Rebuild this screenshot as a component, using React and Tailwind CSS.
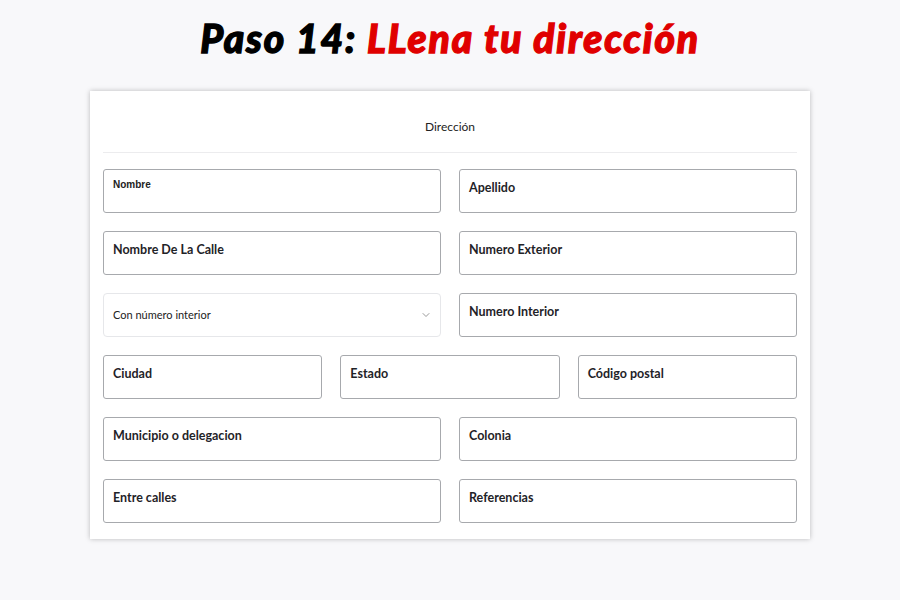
import React from 'react';
import { ChevronDown } from 'lucide-react';

const label = "text-[12.5px] font-bold text-[#1f2328] font-['Lato',sans-serif]";

function Field({ text, className = '' }) {
  return (
    <div className={`h-[44px] rounded-[3px] border border-[#a7a9ad] bg-white px-[9px] pt-[4px] ${className}`}>
      <span className={label}>{text}</span>
    </div>
  );
}

export default function App() {
  return (
    <div className="w-[900px] h-[600px] bg-[#f8f8fa] flex flex-col items-center">
      {/* Heading */}
      <h1 className="mt-[14px] h-[48px] text-[39px] leading-[48px] font-black italic tracking-[1.8px] font-['Lato',sans-serif] [-webkit-text-stroke:1.3px_currentColor]">
        <span className="text-black">Paso 14: </span>
        <span className="text-[#e00000]">LLena tu dirección</span>
      </h1>

      {/* Address card */}
      <div className="mt-[29px] w-[720px] bg-white shadow-[0_0_5px_rgba(0,0,0,0.25)] px-[13px] pb-[16px]">
        <div className="h-[62px] flex items-center justify-center border-b border-[#ececee] pt-[10px]">
          <span className="text-[12px] text-[#222] font-['Lato',sans-serif]">Dirección</span>
        </div>

        <div className="mt-[16px] flex flex-col gap-[18px]">
          <div className="grid grid-cols-2 gap-[18px]">
            <div className="h-[44px] rounded-[3px] border border-[#a7a9ad] bg-white px-[9px] pt-0">
              <span className="text-[10px] font-semibold text-[#222] font-['Liberation_Sans',sans-serif]">Nombre</span>
            </div>
            <Field text="Apellido" />
          </div>

          <div className="grid grid-cols-2 gap-[18px]">
            <Field text="Nombre De La Calle" />
            <Field text="Numero Exterior" />
          </div>

          <div className="grid grid-cols-2 gap-[18px]">
            <div className="h-[44px] rounded-[4px] border border-[#e6e7ea] bg-white pl-[9px] pr-[8px] flex items-center justify-between">
              <span className="text-[11px] text-[#222] font-['Lato',sans-serif]">Con número interior</span>
              <ChevronDown className="w-[12px] h-[12px] text-[#777]" strokeWidth={1.5} />
            </div>
            <Field text="Numero Interior" />
          </div>

          <div className="grid grid-cols-3 gap-[18px]">
            <Field text="Ciudad" />
            <Field text="Estado" />
            <Field text="Código postal" />
          </div>

          <div className="grid grid-cols-2 gap-[18px]">
            <Field text="Municipio o delegacion" />
            <Field text="Colonia" />
          </div>

          <div className="grid grid-cols-2 gap-[18px]">
            <Field text="Entre calles" />
            <Field text="Referencias" />
          </div>
        </div>
      </div>
    </div>
  );
}
